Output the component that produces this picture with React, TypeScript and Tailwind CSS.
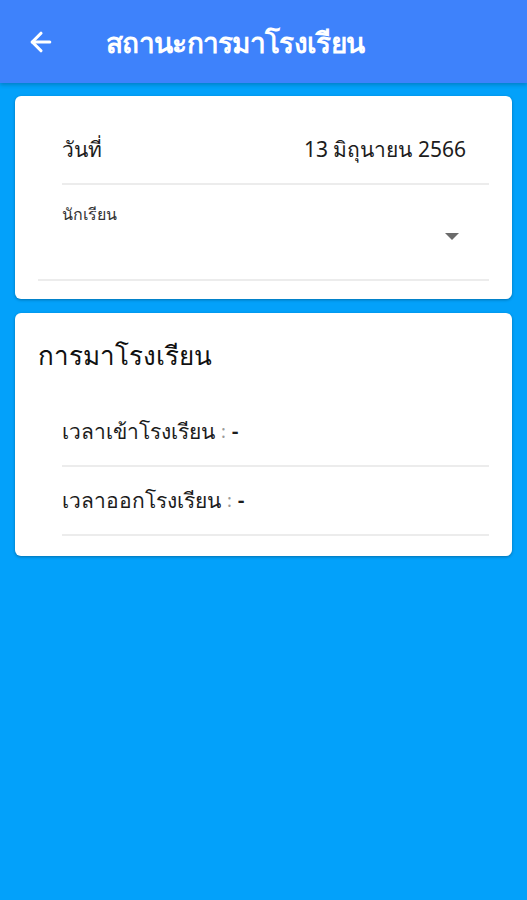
import { ArrowLeft } from 'lucide-react'

const font = { fontFamily: '"Noto Sans", Roboto, sans-serif' }

function Divider({ className = '' }: { className?: string }) {
  return <div className={`h-[2px] bg-[#ececec] ${className}`}></div>
}

function AttendanceRow({ label }: { label: string }) {
  return (
    <div className="pl-[47px] pr-[8px]">
      <div className="h-[67px] flex items-center text-[21px] text-[#1c1c1c]">
        {label} <span className="text-[#9a9a9a] mx-[6px] text-[18px]">:</span> <span className="font-semibold">-</span>
      </div>
      <Divider />
    </div>
  )
}

export default function App() {
  return (
    <div className="min-h-[900px] bg-[#03a1fa]" style={font}>
      {/* App bar */}
      <header className="h-[83px] bg-[#3e82fb] flex items-center shadow-[0_2px_4px_rgba(0,0,0,0.2)]">
        <button className="ml-[26px] text-white">
          <ArrowLeft size={30} strokeWidth={2.5} />
        </button>
        <h1 className="ml-[50px] text-white text-[28px] font-semibold tracking-tight">สถานะการมาโรงเรียน</h1>
      </header>

      <main className="px-[15px] pt-[13px] flex flex-col gap-[14px]">
        {/* Date / student card */}
        <section className="bg-white rounded-[6px] shadow-[0_1px_3px_rgba(0,0,0,0.3)] pb-[18px]">
          <div className="pl-[47px] pr-[23px]">
            <div className="h-[87px] flex items-center justify-between pt-[20px] text-[21px] text-[#1c1c1c]">
              <span>วันที่</span>
              <span className="mr-[23px]">13 มิถุนายน 2566</span>
            </div>
            <Divider />
          </div>
          <div className="pl-[23px] pr-[23px]">
            <div className="h-[94px] pl-[24px] pr-[30px] pt-[17px] relative">
              <span className="text-[16px] text-[#333]">นักเรียน</span>
              <span className="absolute right-[30px] top-[48px] w-0 h-0 border-l-[7px] border-r-[7px] border-t-[7px] border-l-transparent border-r-transparent border-t-[#6b6b6b]"></span>
            </div>
            <Divider />
          </div>
        </section>

        {/* Attendance card */}
        <section className="bg-white rounded-[6px] shadow-[0_1px_3px_rgba(0,0,0,0.3)] pb-[20px]">
          <h2 className="pl-[23px] pt-[23px] text-[26px] font-medium text-[#111]">การมาโรงเรียน</h2>
          <div className="pr-[15px] pt-[23px]">
            <AttendanceRow label="เวลาเข้าโรงเรียน" />
            <AttendanceRow label="เวลาออกโรงเรียน" />
          </div>
        </section>
      </main>
    </div>
  )
}
